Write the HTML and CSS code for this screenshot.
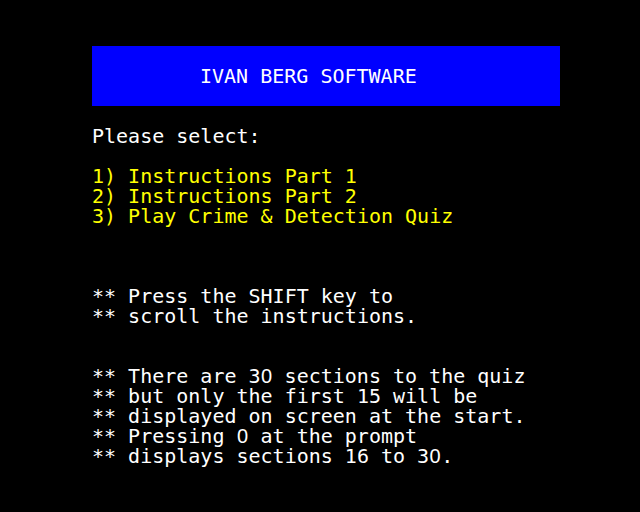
FILE: index.html
```html
<!DOCTYPE html>
<html lang="en">
<head>
    <meta charset="UTF-8">
    <meta name="viewport" content="width=device-width, initial-scale=1.0">
    <title>Ivan Berg Software</title>
    <link rel="stylesheet" href="styles.css">
</head>
<body>
    <div class="screen">
        <div class="row"></div>
        <div class="row"></div>
        <div class="banner">
            <div class="row"></div>
            <div class="row banner-title">IVAN BERG SOFTWARE</div>
            <div class="row"></div>
        </div>
        <div class="row"></div>
        <div class="row white">Please select:</div>
        <div class="row"></div>
        <div class="row yellow">1) Instructions Part 1</div>
        <div class="row yellow">2) Instructions Part 2</div>
        <div class="row yellow">3) Play Crime &amp; Detection Quiz</div>
        <div class="row"></div>
        <div class="row"></div>
        <div class="row"></div>
        <div class="row white">** Press the SHIFT key to</div>
        <div class="row white">** scroll the instructions.</div>
        <div class="row"></div>
        <div class="row"></div>
        <div class="row white">** There are 3<span class="zero">0</span> sections to the quiz</div>
        <div class="row white">** but only the first 15 will be</div>
        <div class="row white">** displayed on screen at the start.</div>
        <div class="row white">** Pressing <span class="zero">0</span> at the prompt</div>
        <div class="row white">** displays sections 16 to 3<span class="zero">0</span>.</div>
        <div class="row"></div>
        <div class="row"></div>
    </div>
</body>
</html>
```

FILE: styles.css
```css
body {
    margin: 0;
    background: #000;
    width: 640px;
    height: 512px;
    overflow: hidden;
}
/* 40 x 25 character grid, 12px x 20px cells */
.screen {
    width: 480px;
    margin: 0 auto;
    padding-top: 6px;
    font-family: "DejaVu Sans Mono", monospace;
    font-size: 20px;
    color: #fff;
}
.row {
    height: 20px;
    line-height: 20px;
    white-space: pre;
    padding-left: 12px;
}
.white {
    color: #fff;
}
.yellow {
    color: #ffff00;
}
.banner {
    margin-left: 12px;
    background: #0000ff;
}
.banner .row {
    padding-left: 0;
}
.banner .banner-title {
    padding-left: 108px;
    color: #fff;
}
/* plain zero without the slash/dot */
.zero {
    display: inline-block;
    width: 12px;
    line-height: 20px;
    vertical-align: top;
    text-align: center;
    font-family: "Liberation Sans", sans-serif;
}
```
